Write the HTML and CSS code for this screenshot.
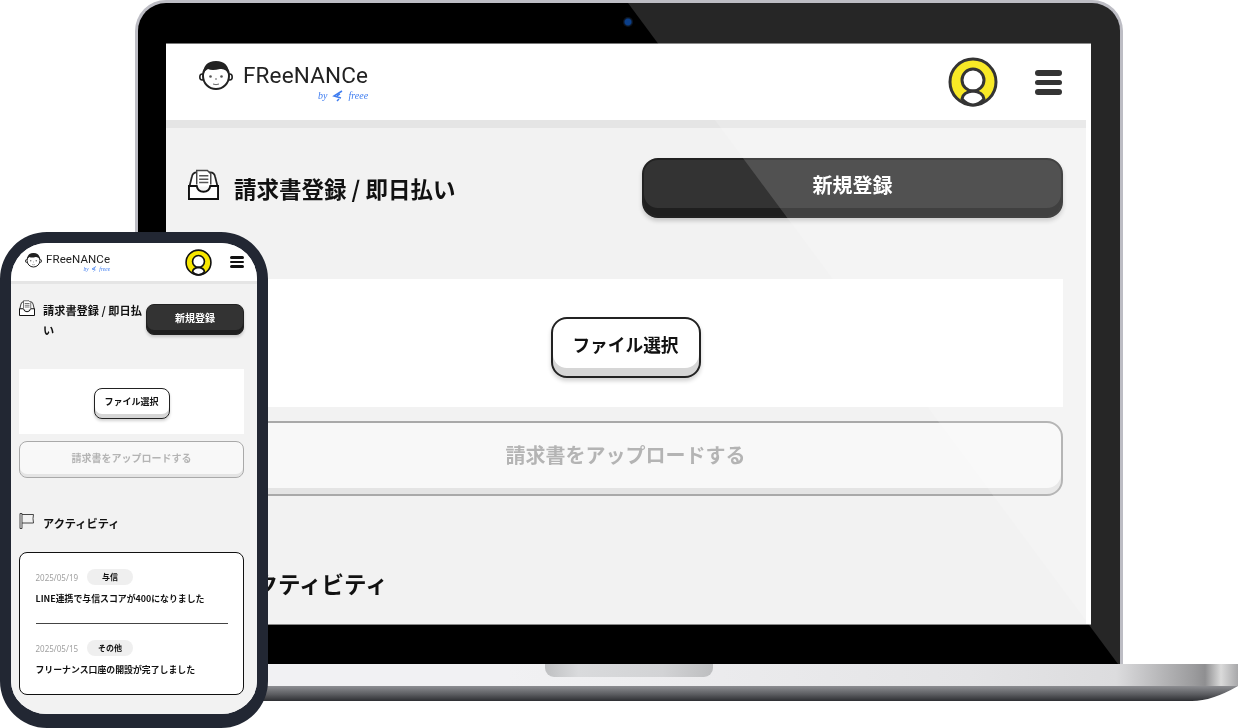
FILE: index.html
```html
<!DOCTYPE html>
<html lang="ja">
<head>
<meta charset="utf-8">
<title>FREENANCE</title>
<link rel="stylesheet" href="styles.css">
</head>
<body>
<svg class="defs" aria-hidden="true">
  <symbol id="face" viewBox="0 0 34 30">
    <ellipse cx="3.2" cy="17" rx="2.4" ry="3" fill="#fff" stroke="#222" stroke-width="1.6"/>
    <ellipse cx="30.8" cy="17" rx="2.4" ry="3" fill="#fff" stroke="#222" stroke-width="1.6"/>
    <ellipse cx="17" cy="16" rx="13" ry="13" fill="#fff" stroke="#222" stroke-width="2"/>
    <path d="M4 15Q4 1 17 1Q30 1 30 15Q27 8 21 9Q13 11 9 9Q5 11 4 15Z" fill="#222"/>
    <circle cx="11.5" cy="16.5" r="1.3" fill="#555"/>
    <circle cx="22.5" cy="16.5" r="1.3" fill="#555"/>
    <path d="M17 18v2M14 24q3 1.4 6 0" fill="none" stroke="#666" stroke-width="1"/>
  </symbol>
  <symbol id="avatar" viewBox="0 0 50 50">
    <circle cx="25" cy="25" r="23" fill="#f7e600" stroke="#111" stroke-width="3"/>
    <circle cx="25" cy="23" r="11" fill="#fff" stroke="#111" stroke-width="3"/>
    <path d="M14 42Q15 35 25 34Q35 35 36 42Q31 48 25 48Q19 48 14 42Z" fill="#fff" stroke="#111" stroke-width="3"/>
  </symbol>
  <symbol id="inbox" viewBox="0 0 32 32">
    <path d="M1.5 18L4 8Q5 3.500 9 3.500H23Q27 3.500 28 8L30.500 18" fill="#fff" stroke="#222" stroke-width="1.800"/>
    <path d="M9 16V1.500H20L23.500 5V16" fill="#fff" stroke="#444" stroke-width="1.500"/>
    <path d="M11.500 7H21M11.500 10.500H21M11.500 14H21" stroke="#555" stroke-width="1.600"/>
    <path d="M1 31V17.500H9Q10 23.500 16 23.500Q22 23.500 23 17.500H31V31Z" fill="#fff" stroke="#111" stroke-width="2"/>
  </symbol>
  <symbol id="flag" viewBox="0 0 16 16">
    <path d="M1 .5H3V15.500H1ZM3 1.500H14.500Q13.500 5.500 14.500 10H3" fill="none" stroke="#333" stroke-width=".9"/>
  </symbol>
  <symbol id="freee" viewBox="0 0 12 12">
    <path d="M10 1L2 6L9 8M5 11L7 9M8 4L5 6" fill="none" stroke="#3f7df0" stroke-width="1.500"/>
  </symbol>
</svg>

<div class="laptop">
  <div class="lid">
    <span class="camera"></span>
    <div class="screen">
      <div class="page">
        <header class="bar">
          <div class="logo">
            <svg class="logo-face"><use href="#face"/></svg>
            <div class="logo-words">
              <span class="logo-name">FReeNANCe</span>
              <span class="logo-by">by <svg class="logo-mark"><use href="#freee"/></svg> freee</span>
            </div>
          </div>
          <div class="bar-actions">
            <svg class="avatar"><use href="#avatar"/></svg>
            <div class="menu"><i></i><i class="thin"></i><i></i></div>
          </div>
        </header>
        <main class="content">
          <div class="title-row">
            <h1 class="title"><svg class="title-icon"><use href="#inbox"/></svg><span>請求書登録 / 即日払い</span></h1>
            <button class="btn btn-dark">新規登録</button>
          </div>
          <div class="file-card"><button class="btn btn-white">ファイル選択</button></div>
          <button class="btn btn-off">請求書をアップロードする</button>
          <h2 class="title activity"><svg class="title-icon"><use href="#flag"/></svg><span>アクティビティ</span></h2>
        </main>
      </div>
    </div>
    <span class="sheen"></span>
  </div>
  <div class="base">
    <span class="notch"></span>
    <span class="base-front"></span>
  </div>
</div>

<div class="phone">
  <div class="page">
    <header class="bar">
      <div class="logo">
        <svg class="logo-face"><use href="#face"/></svg>
        <div class="logo-words">
          <span class="logo-name">FReeNANCe</span>
          <span class="logo-by">by <svg class="logo-mark"><use href="#freee"/></svg> freee</span>
        </div>
      </div>
      <div class="bar-actions">
        <svg class="avatar"><use href="#avatar"/></svg>
        <div class="menu"><i></i><i class="thin"></i><i></i></div>
      </div>
    </header>
    <main class="content">
      <div class="title-row">
        <h1 class="title"><svg class="title-icon"><use href="#inbox"/></svg><span>請求書登録 / 即日払い</span></h1>
        <button class="btn btn-dark">新規登録</button>
      </div>
      <div class="file-card"><button class="btn btn-white">ファイル選択</button></div>
      <button class="btn btn-off">請求書をアップロードする</button>
      <h2 class="title activity"><svg class="title-icon"><use href="#flag"/></svg><span>アクティビティ</span></h2>
      <section class="feed">
        <article class="item">
          <div class="meta"><time class="date">2025/05/19</time><span class="tag">与信</span></div>
          <p class="msg">LINE連携で与信スコアが400になりました</p>
        </article>
        <article class="item">
          <div class="meta"><time class="date">2025/05/15</time><span class="tag">その他</span></div>
          <p class="msg">フリーナンス口座の開設が完了しました</p>
        </article>
      </section>
    </main>
  </div>
</div>
</body>
</html>
```

FILE: styles.css
```css
* { box-sizing: border-box; }
html, body { margin: 0; padding: 0; }
body {
  position: relative;
  width: 1238px;
  height: 728px;
  overflow: hidden;
  background: #fff;
  font-family: "Noto Sans CJK JP", "Noto Sans", sans-serif;
  color: #111;
}
.defs { display: none; }

/* laptop */
.laptop {
  position: absolute;
  left: 20px;
  top: 0;
  width: 1218px;
  display: flex;
  flex-direction: column;
  align-items: center;
}
.lid {
  position: relative;
  width: 988px;
  height: 664px;
  padding: 41px 29px 40px 28px;
  background: #000;
  border: 3px solid #bdbdc4;
  border-bottom: 0;
  border-radius: 31px 31px 0 0;
}
.camera {
  position: absolute;
  left: 485px;
  top: 14px;
  width: 10px;
  height: 10px;
  border-radius: 50%;
  background: radial-gradient(circle, #0b3f8a 0 40%, #0c1420 60%);
}
.sheen {
  position: absolute;
  inset: 0;
  border-radius: 28px 28px 0 0;
  background: rgba(255, 255, 255, .15);
  clip-path: polygon(490px 0, 982px 0, 982px 661px, 980px 661px);
  pointer-events: none;
}
.screen {
  width: 925px;
  height: 580px;
  overflow: hidden;
  background: #fff;
  box-shadow: 0 -1px 0 #777, 0 1px 0 #888;
}
.base {
  position: relative;
  width: 1218px;
  height: 37px;
  display: flex;
  flex-direction: column;
  justify-content: flex-end;
  background: linear-gradient(90deg, #f1f1f3 40%, #e4e4e6 78%, #dcdcde 90%, #9c9c9e 96.300%, #8f8f91 97.300%, #dadada 98.600%, #a8a8aa 100%);
}
.notch {
  position: absolute;
  left: 525px;
  top: 0;
  width: 168px;
  height: 13px;
  border-radius: 0 0 9px 9px;
  background: linear-gradient(90deg, #bfc0c2, #d9dadc 20%, #d2d3d5 70%, #bdbec0);
}
.base-front {
  display: block;
  height: 15px;
  background: linear-gradient(180deg, #8d8e92, #5c5d61 55%, #2e2f33);
}
.base::after {
  content: "";
  position: absolute;
  right: 0;
  bottom: 0;
  width: 46px;
  height: 15px;
  background: #fff;
  clip-path: path("M46 0 Q20 15 0 15 H46 Z");
}

/* app page: laptop scale */
.page {
  width: 920px;
  height: 100%;
  background: #f2f2f2;
  filter: blur(.45px);
}
.bar {
  height: 84px;
  padding: 0 24px 0 33px;
  display: flex;
  align-items: center;
  justify-content: space-between;
  background: #fff;
  border-bottom: 8px solid #e5e5e5;
}
.logo { display: flex; align-items: flex-start; gap: 10px; }
.logo-face { width: 34px; height: 30px; margin-top: -3px; }
.logo-words { display: flex; flex-direction: column; align-items: flex-end; }
.logo-name {
  font-family: Roboto, sans-serif;
  font-weight: 400;
  font-size: 22.500px;
  line-height: 24px;
  letter-spacing: .15px;
  color: #222;
}
.logo-by {
  display: flex;
  align-items: center;
  gap: 2px;
  height: 12px;
  margin-top: 3px;
  font-family: "Liberation Serif", serif;
  font-style: italic;
  font-size: 10px;
  line-height: 12px;
  color: #3f7df0;
  white-space: pre;
}
.logo-mark { width: 12px; height: 12px; }
.bar-actions { display: flex; align-items: center; gap: 37px; }
.avatar { display: block; width: 50px; height: 50px; }
.menu { display: flex; flex-direction: column; gap: 4px; width: 27px; }
.menu i { display: block; height: 6px; border-radius: 3px; background: #111; }
.menu i.thin { height: 5px; }

.content { padding: 30px 23px 0 22px; }
.title-row { display: flex; justify-content: space-between; align-items: flex-start; }
.title {
  display: flex;
  align-items: flex-start;
  gap: 15px;
  margin: 0;
  font-size: 22.500px;
  line-height: 34px;
  font-weight: 700;
  color: #111;
}
.title-row .title { padding-top: 10px; }
.title span { padding-top: 3px; }
.title-icon { flex: none; width: 31px; height: 31px; margin-top: 1px; }
.btn {
  display: flex;
  align-items: center;
  justify-content: center;
  padding: 0 0 8px;
  font-family: inherit;
  font-weight: 700;
  border-radius: 16px;
  border: 2px solid #222;
}
.btn-dark {
  width: 421px;
  height: 60px;
  font-size: 20px;
  color: #fff;
  background: #333;
  box-shadow: inset 0 -8px 0 #1f1f1f, 0 3px 4px rgba(0, 0, 0, .18);
}
.file-card {
  margin-top: 61px;
  height: 128px;
  padding-top: 9px;
  display: flex;
  align-items: center;
  justify-content: center;
  background: #fff;
}
.btn-white {
  width: 150px;
  height: 61px;
  font-size: 17.700px;
  color: #111;
  background: #fff;
  box-shadow: inset 0 -8px 0 #d6d6d6, 0 3px 4px rgba(0, 0, 0, .18);
}
.btn-off {
  width: 100%;
  height: 75px;
  margin-top: 14px;
  font-size: 20px;
  color: #b4b4b4;
  background: #f8f8f8;
  border-color: #a9a9a9;
  box-shadow: inset 0 -6px 0 #e4e4e4;
}
.activity { margin-top: 67px; }

/* phone */
.phone {
  position: absolute;
  left: 0;
  top: 232px;
  width: 268px;
  height: 496px;
  overflow: hidden;
  background: #f2f2f2;
  border: solid #222733;
  border-width: 11px 11px 14px;
  border-radius: 47px;
}
.phone .page { width: 246px; filter: blur(.3px); }
.phone .bar {
  height: 41px;
  padding: 0 13px 0 14px;
  border-bottom-width: 3px;
}
.phone .logo { gap: 4px; }
.phone .logo-face { width: 17px; height: 16px; margin-top: -1px; }
.phone .logo-name { font-size: 11.500px; line-height: 13px; letter-spacing: .1px; }
.phone .logo-by { height: 6px; margin-top: 0; font-size: 5.500px; line-height: 6px; gap: 1px; }
.phone .logo-mark { width: 6px; height: 6px; }
.phone .bar-actions { gap: 18px; }
.phone .avatar { width: 27px; height: 27px; }
.phone .menu { width: 14px; gap: 2px; }
.phone .menu i { height: 3px; }
.phone .menu i.thin { height: 2.500px; }
.phone .content { padding: 16px 13px 0 8px; }
.phone .title { gap: 8px; font-size: 11.200px; line-height: 20px; }
.phone .title-row .title { padding-top: 0; }
.phone .title span { padding-top: 0; }
.phone .title-icon { width: 16px; height: 16px; margin-top: 0; }
.phone .btn { border-width: 1.500px; border-radius: 8px; padding-bottom: 4px; }
.phone .btn-dark {
  flex: none;
  width: 98px;
  height: 31px;
  margin-top: 4px;
  font-size: 10px;
  box-shadow: inset 0 -4px 0 #1f1f1f, 0 2px 3px rgba(0, 0, 0, .18);
}
.phone .file-card { margin-top: 29px; height: 65px; padding-top: 4px; }
.phone .btn-white {
  width: 76px;
  height: 31px;
  font-size: 9px;
  box-shadow: inset 0 -4px 0 #d6d6d6, 0 2px 3px rgba(0, 0, 0, .18);
}
.phone .btn-off {
  height: 37px;
  margin-top: 7px;
  font-size: 10px;
  box-shadow: inset 0 -3px 0 #e4e4e4;
}
.phone .activity { margin-top: 35px; }
.feed {
  margin-top: 19px;
  height: 143px;
  padding: 16px 15px 0 15.500px;
  background: #fff;
  border: 1.500px solid #111;
  border-radius: 8px;
}
.item { padding-bottom: 16px; }
.item + .item { padding-top: 16px; border-top: 1px solid #444; }
.meta { display: flex; align-items: center; gap: 9px; height: 16px; }
.date { font-family: "Noto Sans", sans-serif; font-size: 8px; color: #a0a0a0; }
.tag {
  width: 46px;
  height: 16px;
  border-radius: 8px;
  background: #efefef;
  font-size: 8px;
  line-height: 16px;
  font-weight: 700;
  text-align: center;
}
.msg {
  margin: 6px 0 0;
  font-size: 8.900px;
  line-height: 16px;
  font-weight: 700;
  white-space: nowrap;
}
```
